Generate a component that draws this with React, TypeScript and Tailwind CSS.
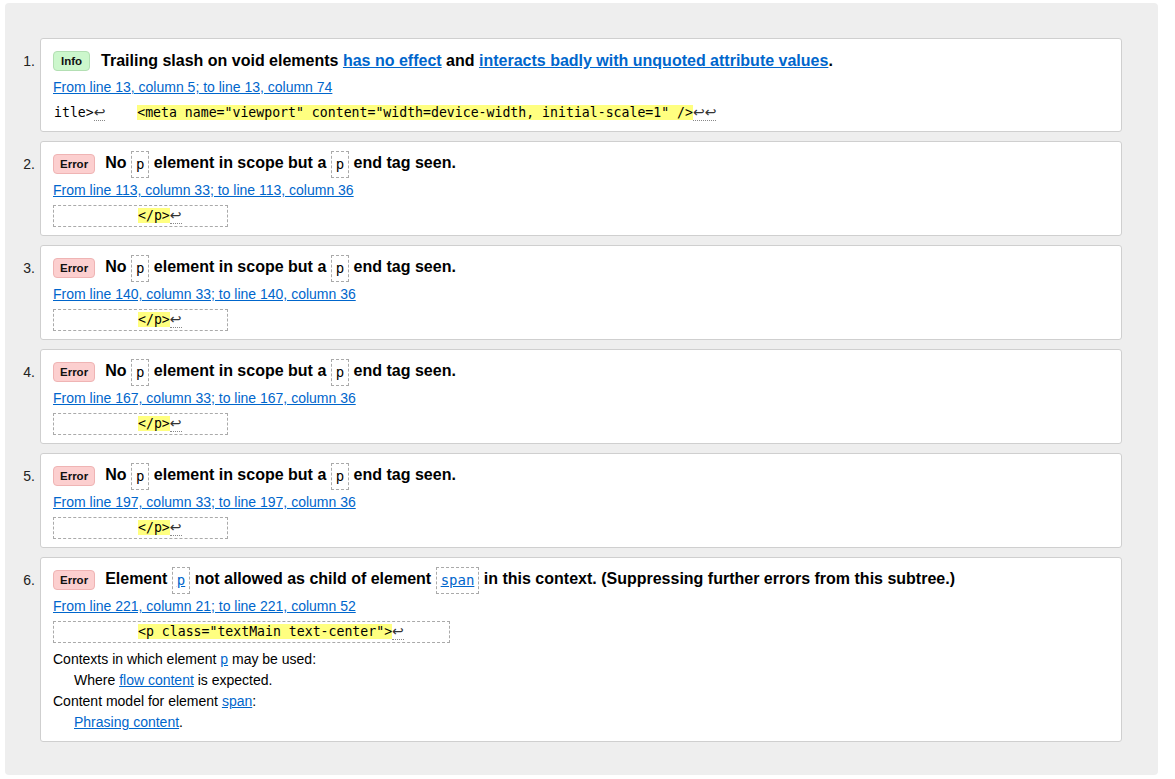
import React from "react";

type Kind = "info" | "error";

const mono = "font-['DejaVu_Sans_Mono','Liberation_Mono',monospace]";
const linkCls = "text-[#0066cc] underline";

function Badge({ kind }: { kind: Kind }) {
  const cls =
    kind === "info"
      ? "bg-[#ccf7cc] border-[#b3dfb3] px-[7px]"
      : "bg-[#fccfcf] border-[#efb4b4] px-[6px]";
  return (
    <span
      className={`inline-block shrink-0 border rounded-[4px] text-[11.5px] font-bold leading-[18px] text-[#111] ${cls}`}
    >
      {kind === "info" ? "Info" : "Error"}
    </span>
  );
}

// dashed box around an element name in the title
function Tag({ children, link }: { children: string; link?: boolean }) {
  return (
    <code
      className={`inline-block align-middle border border-dashed border-[#aaa] px-[4px] py-[3px] text-[14px] leading-[19px] font-normal ${mono} ${
        link ? linkCls : "text-black"
      }`}
    >
      {children}
    </code>
  );
}

function Lf({ n = 1 }: { n?: number }) {
  return (
    <span className="border-b border-dotted border-[#888] font-['DejaVu_Sans',sans-serif] text-[14px] leading-[14px] text-[#333]">
      {"↩".repeat(n)}
    </span>
  );
}

function Card({
  num,
  kind,
  title,
  location,
  code,
  extra,
}: {
  num: number;
  kind: Kind;
  title: React.ReactNode;
  location: string;
  code: React.ReactNode;
  extra?: React.ReactNode;
}) {
  return (
    <li className="flex">
      <div className="w-[35px] shrink-0 pr-[5px] pt-[15px] text-right text-[14px] leading-[17px] text-[#222]">
        {num}.
      </div>
      <div
        className={`flex-1 bg-white border border-[#cfcfcf] rounded-[3px] px-[12px] pt-[5px] ${
          num === 1 ? "pb-[7px]" : "pb-[8px]"
        }`}
      >
        {/* 제목 */}
        <div className="flex items-center h-[33px]">
          <Badge kind={kind} />
          <p
            className={`${
              kind === "info" ? "ml-[11px]" : "ml-[10px]"
            } text-[16px] font-bold leading-[27px] text-black`}
          >
            {title}
          </p>
        </div>
        {/* 위치 */}
        <div className="mt-[1px] text-[14px] leading-[18px]">
          <a href="#" className={linkCls}>
            {location}
          </a>
        </div>
        {/* 코드 발췌 */}
        <div className="mt-[6px] leading-[20px]">{code}</div>
        {extra}
      </div>
    </li>
  );
}

function Extract({ text }: { text: string }) {
  return (
    <code
      className={`inline-block border border-dashed border-[#aaa] pl-[84px] pr-[45px] text-[13.2px] leading-[20px] text-black whitespace-pre ${mono}`}
    >
      <span className="bg-[#ffff80]">{text}</span>
      <Lf />
    </code>
  );
}

export default function App() {
  const noP = (
    <>
      No <Tag>p</Tag> element in scope but a <Tag>p</Tag> end tag seen.
    </>
  );

  return (
    <div className="min-h-screen bg-white pt-[3px] pl-[5px] font-['Liberation_Sans',Arial,sans-serif]">
      <div className="w-[1153px] bg-[#eeeeee] rounded-[4px] pt-[35px] pr-[36px] pb-[33px]">
        <ol className="flex flex-col gap-[9px]">
          <Card
            num={1}
            kind="info"
            title={
              <>
                Trailing slash on void elements{" "}
                <a href="#" className={linkCls}>
                  has no effect
                </a>{" "}
                and{" "}
                <a href="#" className={linkCls}>
                  interacts badly with unquoted attribute values
                </a>
                .
              </>
            }
            location="From line 13, column 5; to line 13, column 74"
            code={
              <code
                className={`inline-block border border-transparent text-[13.2px] leading-[20px] text-black whitespace-pre ${mono}`}
              >
                itle&gt;
                <Lf />
                {"    "}
                <span className="bg-[#ffff80]">
                  {'<meta name="viewport" content="width=device-width, initial-scale=1" />'}
                </span>
                <Lf n={2} />
              </code>
            }
          />
          {[113, 140, 167, 197].map((n, i) => (
            <Card
              key={n}
              num={i + 2}
              kind="error"
              title={noP}
              location={`From line ${n}, column 33; to line ${n}, column 36`}
              code={<Extract text="</p>" />}
            />
          ))}
          <Card
            num={6}
            kind="error"
            title={
              <>
                Element <Tag link>p</Tag> not allowed as child of element{" "}
                <Tag link>span</Tag> in this context. (Suppressing further
                errors from this subtree.)
              </>
            }
            location="From line 221, column 21; to line 221, column 52"
            code={<Extract text={'<p class="textMain text-center">'} />}
            extra={
              <div className="mt-[6px] text-[14px] leading-[21px] text-black">
                <div>
                  Contexts in which element{" "}
                  <a href="#" className={linkCls}>
                    p
                  </a>{" "}
                  may be used:
                </div>
                <div className="pl-[21px]">
                  Where{" "}
                  <a href="#" className={linkCls}>
                    flow content
                  </a>{" "}
                  is expected.
                </div>
                <div>
                  Content model for element{" "}
                  <a href="#" className={linkCls}>
                    span
                  </a>
                  :
                </div>
                <div className="pl-[21px]">
                  <a href="#" className={linkCls}>
                    Phrasing content
                  </a>
                  .
                </div>
              </div>
            }
          />
        </ol>
      </div>
    </div>
  );
}
